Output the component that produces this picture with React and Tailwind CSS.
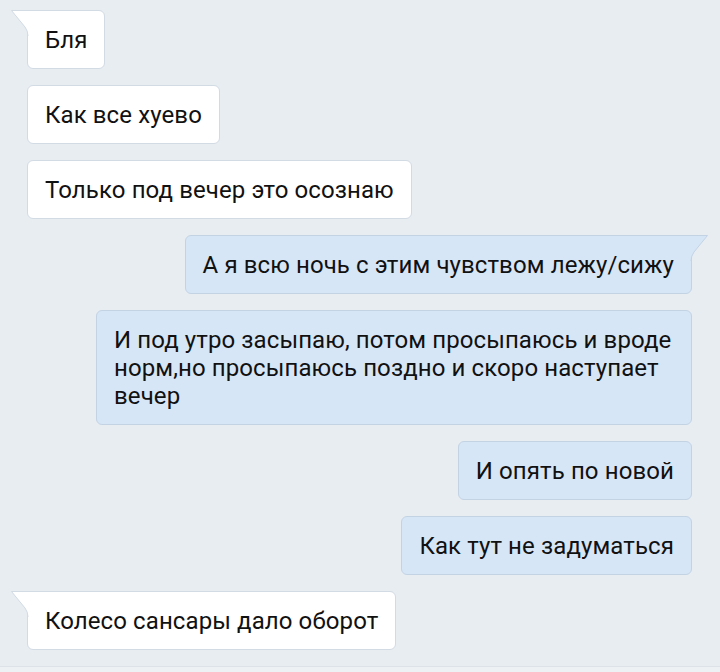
import React from "react";

const messages = [
  { out: false, text: "Бля", tail: true },
  { out: false, text: "Как все хуево" },
  { out: false, text: "Только под вечер это осознаю" },
  { out: true, text: "А я всю ночь с этим чувством лежу/сижу", tail: true },
  {
    out: true,
    text: "И под утро засыпаю, потом просыпаюсь и вроде норм,но просыпаюсь поздно и скоро наступает вечер",
  },
  { out: true, text: "И опять по новой" },
  { out: true, text: "Как тут не задуматься" },
  { out: false, text: "Колесо сансары дало оборот", tail: true },
];

const Tail = ({ out }) => {
  if (out) {
    return (
      <svg
        className="absolute -right-[18px] -top-px"
        width="19"
        height="26"
        viewBox="0 0 19 26"
      >
        <path d="M0 1 H17 L4 17 Q1 21 1 26 H0 Z" fill="#d7e6f7" />
        <path d="M0 0.5 H17.5 L4 17 Q1 21 1 26" fill="none" stroke="#c3d3e4" strokeWidth="1" />
      </svg>
    );
  }
  return (
    <svg
      className="absolute -left-[18px] -top-px"
      width="19"
      height="26"
      viewBox="0 0 19 26"
    >
      <path d="M19 1 H2 L15 17 Q18 21 18 26 H19 Z" fill="#ffffff" />
      <path d="M19 0.5 H1.5 L15 17 Q18 21 18 26" fill="none" stroke="#d2dae3" strokeWidth="1" />
    </svg>
  );
};

const Bubble = ({ msg }) => {
  const cls = msg.out
    ? "self-end bg-[#d7e6f7] border-[#c3d3e4]"
    : "self-start bg-white border-[#d2dae3]";
  const corner = msg.tail ? (msg.out ? "rounded-tr-none" : "rounded-tl-none") : "";
  return (
    <div
      className={`relative max-w-[596px] rounded-md border px-[17px] pt-[15px] pb-[14px] text-[24px] leading-[28px] tracking-[0.1px] text-[#111] ${cls} ${corner}`}
    >
      {msg.tail && <Tail out={msg.out} />}
      {msg.text}
    </div>
  );
};

export default function App() {
  return (
    <div
      className="min-h-screen w-[720px] bg-[#e8edf2]"
      style={{ fontFamily: "Roboto, 'Noto Sans', sans-serif" }}
    >
      <div className="flex h-[666px] flex-col gap-4 pl-[27px] pr-[28px] pt-[10px]">
        {messages.map((m, i) => (
          <Bubble key={i} msg={m} />
        ))}
      </div>
      <div className="h-[6px] border-t border-[#dde2e8] bg-[#eef1f4]" />
    </div>
  );
}
